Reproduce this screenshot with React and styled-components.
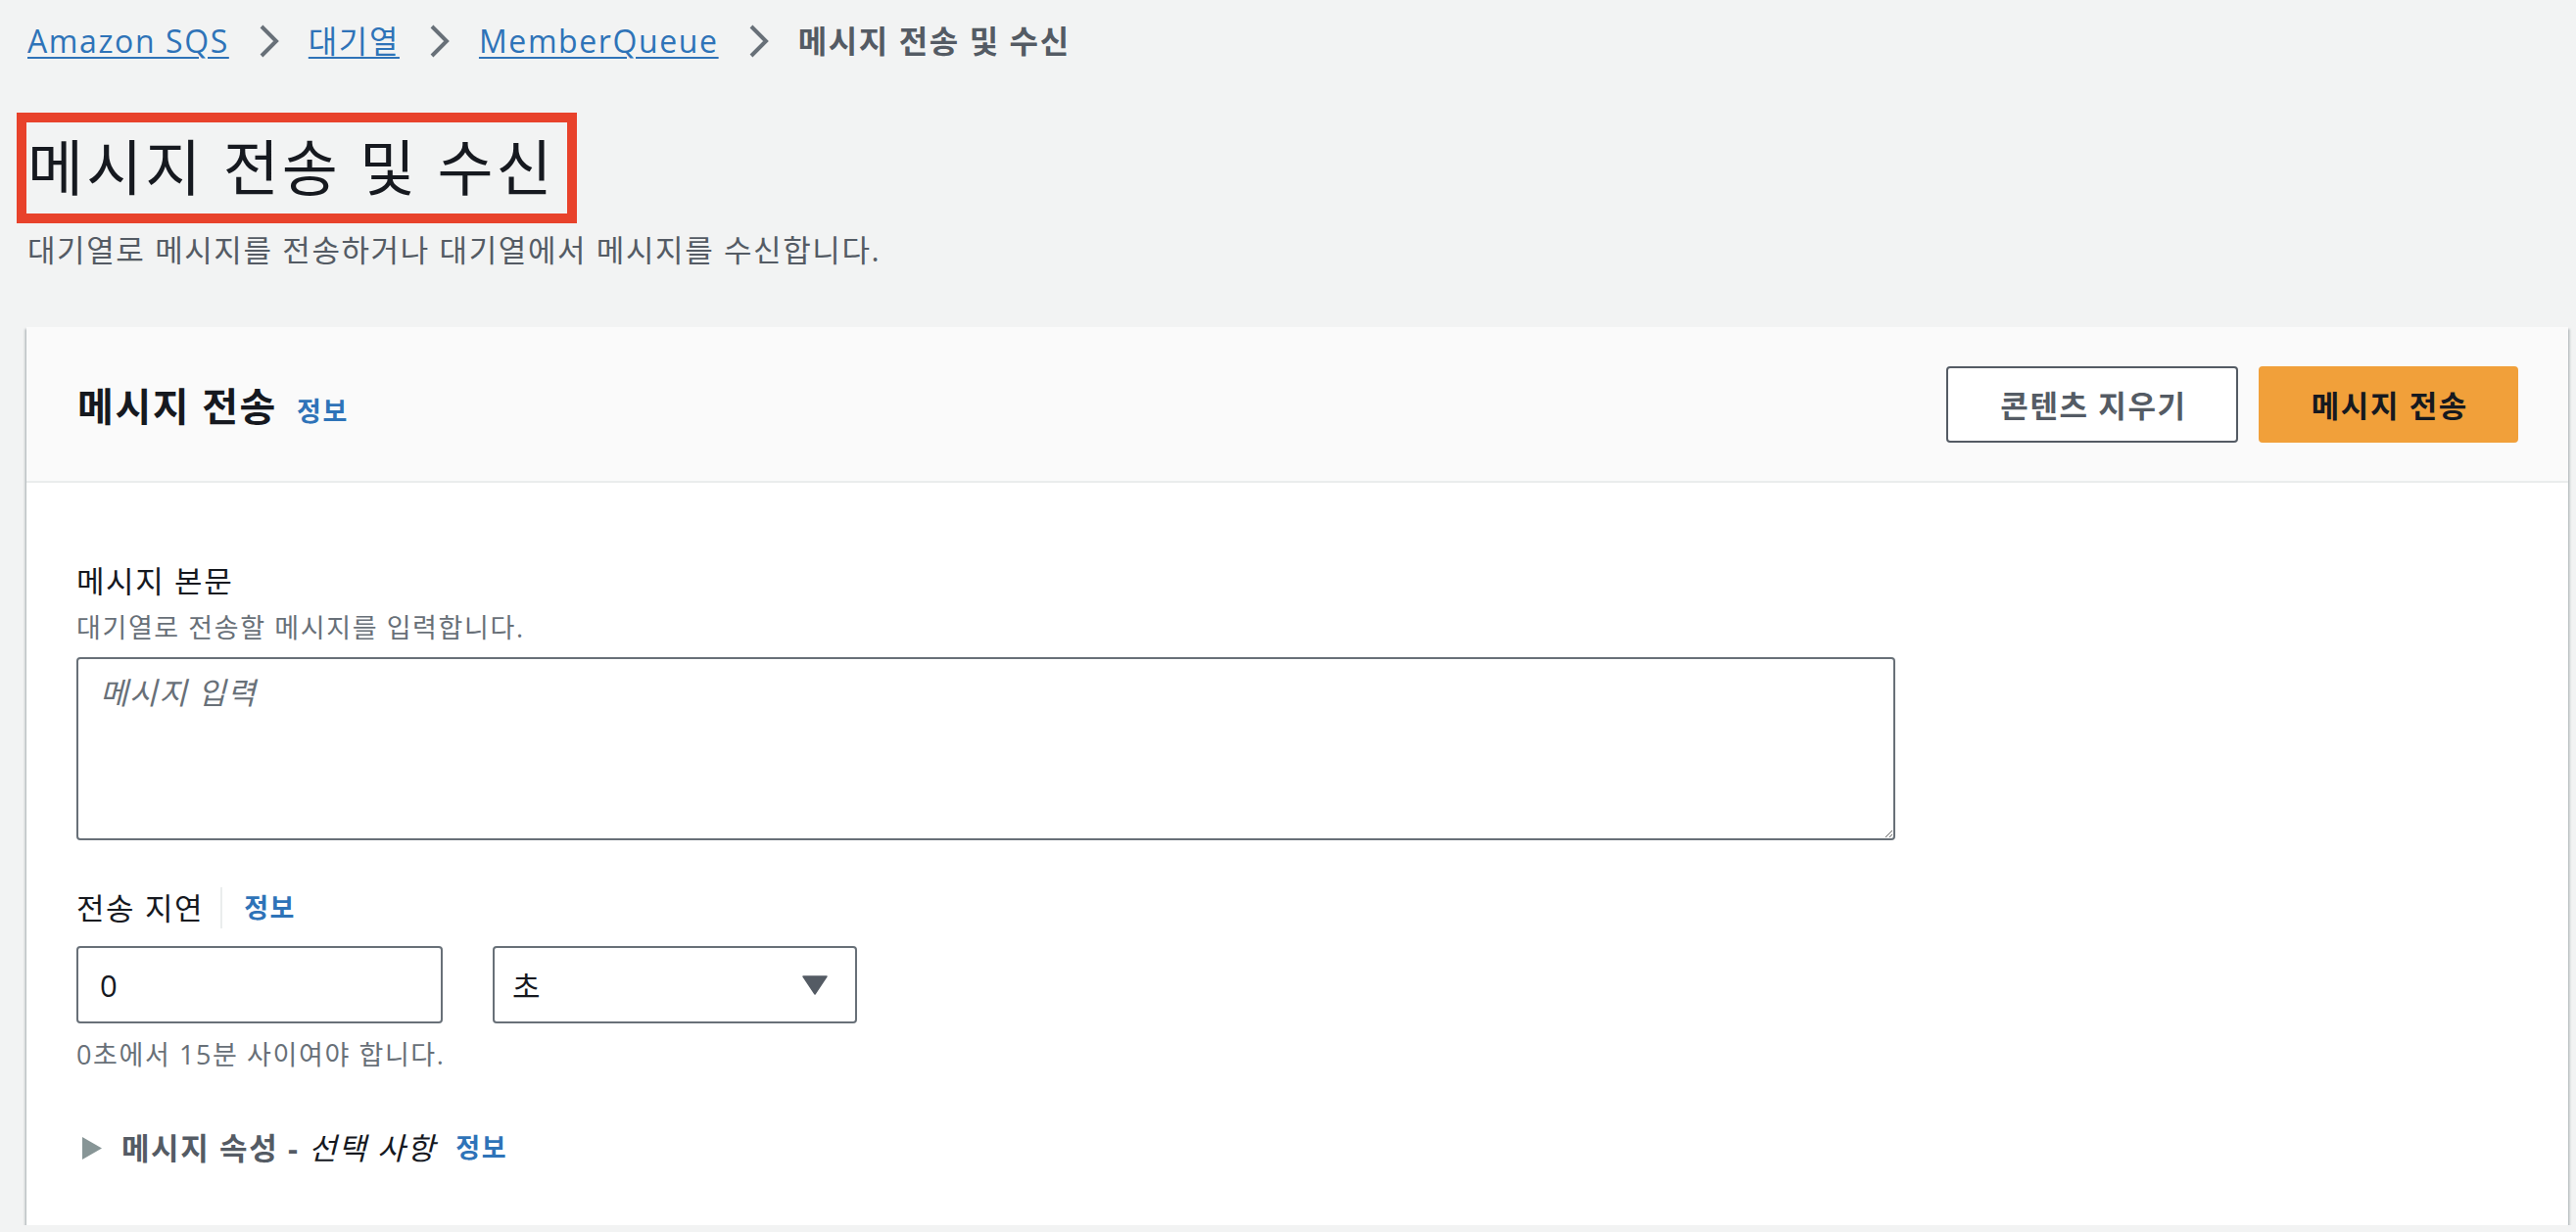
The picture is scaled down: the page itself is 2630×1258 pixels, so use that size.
import React from "react";
import styled, { createGlobalStyle } from "styled-components";

const GlobalStyle = createGlobalStyle`
  html, body {
    margin: 0;
    padding: 0;
    background: #f2f3f3;
    font-family: "Open Sans", "Noto Sans CJK KR", sans-serif;
    letter-spacing: 0.1em;
    color: #16191f;
  }
  * {
    box-sizing: border-box;
  }
`;

const Page = styled.div`
  display: flex;
  flex-direction: column;
  padding: 0 8px 0 27px;
`;

const Breadcrumbs = styled.nav`
  display: flex;
  align-items: center;
  gap: 29px;
  padding: 22px 0 0 1px;
  height: 62px;
  font-size: 32px;
  line-height: 40px;
  letter-spacing: 0.05em;
`;

const Crumb = styled.a`
  color: #2e73b8;
  text-decoration: underline;
  text-decoration-thickness: 2px;
  text-underline-offset: 4px;
`;

const CurrentCrumb = styled.span`
  color: #545b64;
  font-weight: 700;
`;

const Title = styled.h1`
  align-self: flex-start;
  margin: 53px 0 0 -10px;
  padding: 0 12px 0 1px;
  border: 10px solid #e8422b;
  font-size: 62px;
  line-height: 93px;
  font-weight: 400;
  letter-spacing: 0.05em;
  color: #16191f;
`;

const Subtitle = styled.p`
  margin: 7px 0 0 1px;
  font-size: 31px;
  line-height: 40px;
  color: #545b64;
`;

const Panel = styled.section`
  margin-top: 59px;
  background: #ffffff;
  box-shadow: 0 2px 2px 0 rgba(0, 28, 36, 0.3), 2px 2px 2px 0 rgba(0, 28, 36, 0.15),
    -2px 2px 2px 0 rgba(0, 28, 36, 0.15);
`;

const PanelHeader = styled.header`
  display: flex;
  align-items: center;
  justify-content: space-between;
  height: 159px;
  padding: 0 51px 0 52px;
  background: #fafafa;
  border-bottom: 2px solid #eaeded;
`;

const HeaderTitle = styled.h2`
  display: flex;
  align-items: baseline;
  gap: 20px;
  margin: 0;
  font-size: 40px;
  font-weight: 700;
  color: #16191f;
`;

const InfoLink = styled.a`
  color: #2e73b8;
  font-size: 27px;
  font-weight: 700;
  letter-spacing: 0.06em;
  text-decoration: none;
`;

const Actions = styled.div`
  display: flex;
  gap: 21px;
`;

const Button = styled.button`
  height: 78px;
  padding: ${(p) => (p.$primary ? "0 49px 0 52px" : "0 50px 0 53px")};
  border-radius: 4px;
  border: 2px solid ${(p) => (p.$primary ? "#f1a03a" : "#545b64")};
  background: ${(p) => (p.$primary ? "#f1a03a" : "#ffffff")};
  color: ${(p) => (p.$primary ? "#16191f" : "#545b64")};
  font-family: inherit;
  letter-spacing: inherit;
  font-size: 31px;
  font-weight: 700;
`;

const PanelBody = styled.div`
  display: flex;
  flex-direction: column;
  padding: 80px 51px 59px;
`;

const Label = styled.div`
  display: flex;
  align-items: center;
  font-size: 31px;
  line-height: 40px;
  color: #16191f;
  margin-top: ${(p) => p.$top || 0}px;
`;

const LabelDivider = styled.span`
  width: 2px;
  height: 42px;
  margin: 0 22px 0 17px;
  background: #eaeded;
`;

const Description = styled.div`
  margin-top: ${(p) => p.$top || 0}px;
  font-size: 27px;
  line-height: 36px;
  color: #687078;
`;

const TextArea = styled.textarea`
  margin-top: 12px;
  width: 1857px;
  height: 187px;
  padding: 14px 22px;
  border: 2px solid #687078;
  border-radius: 4px;
  font-family: inherit;
  letter-spacing: inherit;
  font-size: 31px;
  line-height: 40px;
  &::placeholder {
    color: #687078;
    font-style: italic;
  }
`;

const FieldRow = styled.div`
  display: flex;
  gap: 51px;
  margin-top: 18px;
`;

const Input = styled.input`
  width: 374px;
  height: 79px;
  padding: 0 22px;
  border: 2px solid #687078;
  border-radius: 4px;
  font-family: inherit;
  letter-spacing: inherit;
  font-size: 31px;
  color: #16191f;
`;

const Select = styled.div`
  display: flex;
  align-items: center;
  justify-content: space-between;
  width: 372px;
  height: 79px;
  padding: 0 28px 0 18px;
  border: 2px solid #687078;
  border-radius: 4px;
  font-size: 31px;
  color: #16191f;
`;

const Expander = styled.div`
  display: flex;
  align-items: center;
  margin-top: 57px;
  padding-left: 5px;
  font-size: 31px;
  line-height: 40px;
  font-weight: 700;
  color: #545b64;
  em {
    font-style: italic;
    font-weight: 400;
    color: #16191f;
  }
`;

const ExpanderText = styled.span`
  margin: 0 20px 0 19px;
`;

const Chevron = () => (
  <svg width="23" height="36" viewBox="0 0 23 36">
    <path d="M4 3 L19 18 L4 33" fill="none" stroke="#687078" strokeWidth="4" />
  </svg>
);

function App() {
  return (
    <>
      <GlobalStyle />
      <Page>
        <Breadcrumbs>
          <Crumb>Amazon SQS</Crumb>
          <Chevron />
          <Crumb>대기열</Crumb>
          <Chevron />
          <Crumb>MemberQueue</Crumb>
          <Chevron />
          <CurrentCrumb>메시지 전송 및 수신</CurrentCrumb>
        </Breadcrumbs>
        <Title>메시지 전송 및 수신</Title>
        <Subtitle>대기열로 메시지를 전송하거나 대기열에서 메시지를 수신합니다.</Subtitle>
        <Panel>
          <PanelHeader>
            <HeaderTitle>
              메시지 전송
              <InfoLink>정보</InfoLink>
            </HeaderTitle>
            <Actions>
              <Button>콘텐츠 지우기</Button>
              <Button $primary>메시지 전송</Button>
            </Actions>
          </PanelHeader>
          <PanelBody>
            <Label>메시지 본문</Label>
            <Description $top={10}>대기열로 전송할 메시지를 입력합니다.</Description>
            <TextArea placeholder="메시지 입력" />
            <Label $top={48}>
              전송 지연
              <LabelDivider />
              <InfoLink>정보</InfoLink>
            </Label>
            <FieldRow>
              <Input defaultValue="0" />
              <Select>
                초
                <svg width="26" height="20" viewBox="0 0 26 20">
                  <path d="M1 1 H25 L13 19 Z" fill="#545b64" strokeLinejoin="round" stroke="#545b64" strokeWidth="1.5" />
                </svg>
              </Select>
            </FieldRow>
            <Description $top={14}>0초에서 15분 사이여야 합니다.</Description>
            <Expander>
              <svg width="22" height="25" viewBox="0 0 22 25">
                <path d="M1 1 L21 12.5 L1 24 Z" fill="#879596" />
              </svg>
              <ExpanderText>
                메시지 속성 - <em>선택 사항</em>
              </ExpanderText>
              <InfoLink>정보</InfoLink>
            </Expander>
          </PanelBody>
        </Panel>
      </Page>
    </>
  );
}

export default App;
